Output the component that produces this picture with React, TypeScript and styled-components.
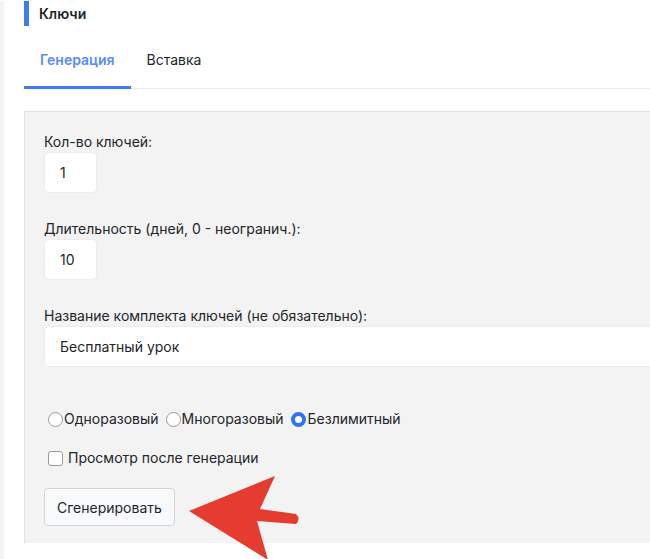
import React, { useState } from 'react';
import styled, { createGlobalStyle } from 'styled-components';

const GlobalStyle = createGlobalStyle`
  html, body {
    margin: 0;
    padding: 0;
    background: #ffffff;
    overflow: hidden;
  }
  body {
    font-family: Inter, 'Noto Sans', sans-serif;
    font-size: 14px;
    color: #212529;
  }
`;

const Page = styled.div`
  position: relative;
  height: 559px;
  border-left: 4px solid #f3f4f6;
  padding-left: 20px;
  width: 720px;
  box-sizing: border-box;
`;

const Header = styled.div`
  display: flex;
  align-items: center;
  height: 25px;
  margin-top: 1px;
  border-left: 5px solid #3f7cf4;
  padding-left: 10px;
  font-size: 14px;
  font-weight: 600;
  color: #212529;
`;

const Tabs = styled.div`
  display: flex;
  margin-top: 8px;
  border-bottom: 1px solid #e9ecef;
`;

const Tab = styled.div<{ $active?: boolean }>`
  padding: 16px 16px 16px;
  font-size: 14px;
  line-height: 20px;
  font-weight: ${({ $active }) => ($active ? 600 : 400)};
  color: ${({ $active }) => ($active ? '#5a8cf5' : '#212529')};
  border-bottom: 3px solid ${({ $active }) => ($active ? '#3f7cf4' : 'transparent')};
  margin-bottom: -1px;
`;

const Panel = styled.div`
  margin-top: 22px;
  background: #f3f3f3;
  border-top: 1px solid #e2e2e2;
  border-left: 1px solid #e2e2e2;
  padding: 20px 0 17px 19px;
  display: flex;
  flex-direction: column;
`;

const Field = styled.div`
  display: flex;
  flex-direction: column;
  align-items: flex-start;
  margin-bottom: 26px;
`;

const Label = styled.label`
  font-size: 14px;
  line-height: 20px;
  color: #212529;
`;

const Input = styled.input<{ $wide?: boolean }>`
  box-sizing: border-box;
  width: ${({ $wide }) => ($wide ? '100%' : '53px')};
  height: 41px;
  padding: 0 15px;
  border: 1px solid #ececf0;
  border-radius: 5px;
  background: #ffffff;
  font-family: Inter, 'Noto Sans', sans-serif;
  font-size: 14px;
  color: #212529;
  outline: none;
`;

const RadioRow = styled.div`
  display: flex;
  align-items: center;
  margin-top: 16px;
  padding-left: 4px;
  gap: 7px;
`;

const RadioOption = styled.label`
  display: flex;
  align-items: center;
  font-size: 14px;
  line-height: 20px;
`;

const RadioDot = styled.span<{ $checked?: boolean }>`
  box-sizing: border-box;
  width: 15px;
  height: 15px;
  border-radius: 50%;
  background: #ffffff;
  border: ${({ $checked }) => ($checked ? '4px solid #2f74f6' : '1px solid #9a9a9a')};
  margin-right: ${({ $checked }) => ($checked ? '2px' : '1px')};
`;

const CheckRow = styled.label`
  display: flex;
  align-items: center;
  gap: 5px;
  margin-top: 19px;
  padding-left: 4px;
  font-size: 14px;
  line-height: 20px;
`;

const CheckBox = styled.span`
  box-sizing: border-box;
  width: 15px;
  height: 15px;
  border-radius: 3px;
  background: #ffffff;
  border: 1px solid #9a9a9a;
`;

const Button = styled.button`
  align-self: flex-start;
  margin-top: 20px;
  height: 38px;
  padding: 0 12px;
  border: 1px solid #d2d4d8;
  border-radius: 4px;
  background: #f8f9fa;
  font-family: Inter, 'Noto Sans', sans-serif;
  font-size: 14px;
  color: #212529;
`;

const Arrow = styled.svg`
  position: absolute;
  left: 0;
  top: 0;
  pointer-events: none;
`;

const modes = ['Одноразовый', 'Многоразовый', 'Безлимитный'];

export default function App() {
  const [mode] = useState(2);
  return (
    <>
      <GlobalStyle />
      <Page>
        <Header>Ключи</Header>
        <Tabs>
          <Tab $active>Генерация</Tab>
          <Tab>Вставка</Tab>
        </Tabs>
        <Panel>
          <Field>
            <Label>Кол-во ключей:</Label>
            <Input defaultValue="1" />
          </Field>
          <Field>
            <Label>Длительность (дней, 0 - неогранич.):</Label>
            <Input defaultValue="10" />
          </Field>
          <Field>
            <Label>Название комплекта ключей (не обязательно):</Label>
            <Input $wide defaultValue="Бесплатный урок" />
          </Field>
          <RadioRow>
            {modes.map((m, i) => (
              <RadioOption key={m}>
                <RadioDot $checked={i === mode} />
                {m}
              </RadioOption>
            ))}
          </RadioRow>
          <CheckRow>
            <CheckBox />
            Просмотр после генерации
          </CheckRow>
          <Button>Сгенерировать</Button>
        </Panel>
        <Arrow width="650" height="559" viewBox="0 0 650 559">
          <path
            d="M185 510 L271 475 L256 508 L292 513 Q297 518 292 523 L253 520 L264 559 Z"
            fill="#e53b30"
          />
        </Arrow>
      </Page>
    </>
  );
}
